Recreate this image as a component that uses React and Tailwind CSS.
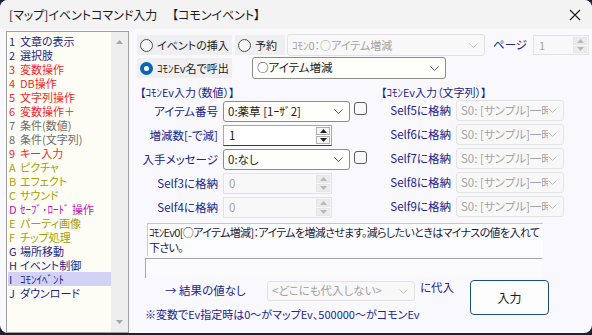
import React from "react";

const NAVY = "text-[#22228c]";

const items = [
  ["1", "文章の表示", "text-[#1e1e8a]"],
  ["2", "選択肢", "text-[#1e1e8a]"],
  ["3", "変数操作", "text-[#f02828]"],
  ["4", "DB操作", "text-[#f02828]"],
  ["5", "文字列操作", "text-[#f02828]"],
  ["6", "変数操作＋", "text-[#f02828]"],
  ["7", "条件(数値)", "text-[#6e6e6e]"],
  ["8", "条件(文字列)", "text-[#6e6e6e]"],
  ["9", "キー入力", "text-[#f02828]"],
  ["A", "ピクチャ", "text-[#a89f00]"],
  ["B", "エフェクト", "text-[#a89f00]"],
  ["C", "サウンド", "text-[#a89f00]"],
  ["D", "ｾｰﾌﾞ･ﾛｰﾄﾞ 操作", "text-[#c410b4]"],
  ["E", "パーティ画像", "text-[#a89f00]"],
  ["F", "チップ処理", "text-[#a89f00]"],
  ["G", "場所移動", "text-[#1e1e8a]"],
  ["H", "イベント制御", "text-[#1e1e8a]"],
  ["I", "ｺﾓﾝｲﾍﾞﾝﾄ", "text-[#1e1e8a]", true],
  ["J", "ダウンロード", "text-[#1e1e8a]"],
];

function Chevron({ color = "#5a5a5a" }) {
  return (
    <svg width="9" height="5" viewBox="0 0 9 5" fill="none" className="shrink-0">
      <path d="M0.5 0.5L4.5 4.5L8.5 0.5" stroke={color} strokeWidth="1" />
    </svg>
  );
}

function Tri({ up, color }) {
  return (
    <svg width="7" height="4" viewBox="0 0 7 4">
      <path d={up ? "M0 4L3.5 0L7 4Z" : "M0 0L3.5 4L7 0Z"} fill={color} />
    </svg>
  );
}

function Combo({ text, disabled, className }) {
  return (
    <div
      className={
        "flex items-center justify-between rounded-[3px] border pl-[4px] pr-[6px] overflow-hidden shrink-0 " +
        (disabled
          ? "border-[#e3e3e3] bg-[#f8f8f8] text-[#a3a3a3] "
          : "border-[#8c8c8c] bg-[#fefefb] text-[#1a1a1a] ") +
        className
      }
    >
      <span className="whitespace-nowrap overflow-hidden flex-1">{text}</span>
      <Chevron color={disabled ? "#c4c4c4" : "#5a5a5a"} />
    </div>
  );
}

function Spin({ value, disabled, className }) {
  const tri = disabled ? "#b8b8b8" : "#202020";
  const btn = disabled ? "border-[#e6e6e6] bg-[#ececec]" : "border-[#b0b0b0] bg-[#f6f6f6]";
  return (
    <div
      className={
        "flex items-stretch border shrink-0 " +
        (disabled
          ? "border-[#e3e3e3] bg-[#f8f8f8] text-[#a3a3a3] "
          : "border-[#a8a8a8] border-b-[#3c3c3c] bg-white text-[#1a1a1a] ") +
        className
      }
    >
      <span className="flex-1 pl-[5px] flex items-center">{value}</span>
      <div className="w-[16px] flex flex-col gap-[1px] p-[1px]">
        <div className={"flex-1 flex items-center justify-center border " + btn}>
          <Tri up color={tri} />
        </div>
        <div className={"flex-1 flex items-center justify-center border " + btn}>
          <Tri color={tri} />
        </div>
      </div>
    </div>
  );
}

function Radio({ label, checked, className }) {
  return (
    <div className={"flex items-center gap-[4px] bg-[#efeff1] pl-[3px] h-[20px] text-[#1c1c1c] shrink-0 " + className}>
      {checked ? (
        <span className="w-[13px] h-[13px] rounded-full bg-[#0a64b8] flex items-center justify-center shrink-0">
          <span className="w-[5px] h-[5px] rounded-full bg-white" />
        </span>
      ) : (
        <span className="w-[13px] h-[13px] rounded-full border border-[#4e4e4e] bg-[#f6f6f6] shrink-0" />
      )}
      <span className="text-[11px] whitespace-nowrap">{label}</span>
    </div>
  );
}

function Check() {
  return <span className="w-[13px] h-[13px] rounded-[3px] border border-[#5c5c5c] bg-[#f8f8f8] shrink-0" />;
}

export default function App() {
  return (
    <div className="w-[592px] h-[335px] bg-[#1b2333] overflow-hidden font-['Noto_Sans_CJK_JP',sans-serif] [font-feature-settings:'palt']">
      <div className="h-[333px] rounded-[8px] bg-[#f9f9fd] flex flex-col overflow-hidden">
        {/* title bar */}
        <div className="h-[29px] bg-[#f3f3f3] flex items-center justify-between pl-[9px] pr-[10px] shrink-0">
          <span className="text-[12px] text-[#1c1c1c] whitespace-pre">
            [マップ]イベントコマンド入力　 【コモンイベント】
          </span>
          <svg width="12" height="12" viewBox="0 0 12 12" className="mr-[1px]">
            <path d="M1 1L11 11M11 1L1 11" stroke="#1c1c1c" strokeWidth="1.1" />
          </svg>
        </div>

        <div className="flex flex-1 pl-[6px] pt-[2px]">
          {/* command list */}
          <div className="w-[123px] h-[302px] border border-[#a0a0a0] bg-[#fdfdf5] flex shrink-0">
            <div className="flex-1 pt-[2px] pl-[1px]">
              {items.map(([k, t, c, sel]) => (
                <div
                  key={k}
                  className={
                    "h-[14px] leading-[14px] text-[11px] pl-[1px] whitespace-nowrap flex " +
                    c +
                    (sel ? " bg-[#d2d2f6]" : "")
                  }
                >
                  <span className="w-[11px]">{k}</span>
                  <span>{t}</span>
                </div>
              ))}
            </div>
            <div className="w-[17px] bg-[#eeeeee] flex flex-col items-center justify-between py-[8px]">
              <Tri up color="#a6a6a6" />
              <Tri color="#a6a6a6" />
            </div>
          </div>

          {/* right pane */}
          <div className="flex-1 pl-[8px] pt-[3px] pr-[2px] flex flex-col text-[11px]">
            <div className="flex items-center h-[22px]">
              <Radio label="イベントの挿入" className="w-[95px]" />
              <Radio label="予約" className="w-[50px] ml-[3px]" />
              <Combo text="ｺﾓﾝ0：○アイテム増減" disabled className="w-[198px] h-[22px] ml-[2px]" />
              <span className={"ml-[8px] text-[11.5px] whitespace-nowrap " + NAVY}>ページ</span>
              <Spin value="1" disabled className="w-[56px] h-[20px] ml-[6px]" />
            </div>
            <div className="flex items-center h-[22px] mt-[1px]">
              <Radio label="ｺﾓﾝEv名で呼出" checked className="w-[95px]" />
              <Combo text="○アイテム増減" className="w-[194px] h-[22px] ml-[20px] text-[11.5px]" />
            </div>

            <div className="flex mt-[6px]">
              {/* numeric inputs */}
              <div className="w-[244px] flex flex-col shrink-0">
                <div className={"h-[14px] leading-[14px] pl-[3px] " + NAVY}>【ｺﾓﾝEv入力（数値）】</div>
                <div className="flex flex-col gap-[3px] mt-[2px]">
                  <div className="flex items-center h-[21px]">
                    <span className={"w-[81px] text-right text-[11.5px] whitespace-nowrap " + NAVY}>アイテム番号</span>
                    <Combo text="0:薬草 [1ｰｻﾞ2]" className="w-[127px] h-[21px] ml-[5px] text-[11.5px]" />
                    <span className="ml-[4px] -mt-[6px] flex">
                      <Check />
                    </span>
                  </div>
                  <div className="flex items-center h-[21px]">
                    <span className={"w-[81px] text-right text-[11.5px] whitespace-nowrap " + NAVY}>増減数[-で減]</span>
                    <Spin value="1" className="w-[109px] h-[21px] ml-[5px] text-[11.5px]" />
                  </div>
                  <div className="flex items-center h-[21px]">
                    <span className={"w-[81px] text-right text-[11.5px] whitespace-nowrap " + NAVY}>入手メッセージ</span>
                    <Combo text="0:なし" className="w-[127px] h-[21px] ml-[5px] text-[11.5px]" />
                    <span className="ml-[4px] -mt-[4px] flex">
                      <Check />
                    </span>
                  </div>
                  <div className="flex items-center h-[21px]">
                    <span className={"w-[81px] text-right text-[11.5px] whitespace-nowrap " + NAVY}>Self3に格納</span>
                    <Spin value="0" disabled className="w-[109px] h-[21px] ml-[5px] text-[11.5px]" />
                  </div>
                  <div className="flex items-center h-[21px]">
                    <span className={"w-[81px] text-right text-[11.5px] whitespace-nowrap " + NAVY}>Self4に格納</span>
                    <Spin value="0" disabled className="w-[109px] h-[21px] ml-[5px] text-[11.5px]" />
                  </div>
                </div>
              </div>

              {/* string inputs */}
              <div className="flex flex-col">
                <div className={"h-[14px] leading-[14px] whitespace-nowrap " + NAVY}>【ｺﾓﾝEv入力（文字列）】</div>
                <div className="flex flex-col gap-[3px] mt-[1px]">
                  {["Self5に格納", "Self6に格納", "Self7に格納", "Self8に格納", "Self9に格納"].map((l) => (
                    <div key={l} className="flex items-center h-[21px]">
                      <span className={"w-[70px] text-right text-[11.5px] whitespace-nowrap " + NAVY}>{l}</span>
                      <Combo text="S0: [サンプル]一時保存" disabled className="w-[108px] h-[21px] ml-[5px] text-[11.5px]" />
                    </div>
                  ))}
                </div>
              </div>
            </div>

            {/* description */}
            <div className="ml-[10px] mt-[5px] w-[396px] h-[33px] border-t border-l border-[#c8c8c8] bg-[#fdfdff] text-[11px] tracking-[-0.65px] leading-[15px] text-[#1a1a40] pl-[1px] pt-[1px] whitespace-nowrap overflow-hidden">
              ｺﾓﾝEv0[○アイテム増減]：アイテムを増減させます。減らしたいときはマイナスの値を入れて
              <br />
              下さい。
            </div>
            <div className="ml-[8px] mt-[2px] w-[397px] h-[20px] border-t border-l border-[#a4a4a4] bg-[#fbfbfe]" />

            {/* bottom */}
            <div className="flex mt-[2px]">
              <div className="flex flex-col w-[333px] shrink-0">
                <div className="flex items-center h-[22px]">
                  <span className={"ml-[28px] w-[102px] text-[11.5px] whitespace-nowrap " + NAVY}>→ 結果の値なし</span>
                  <Combo text="<どこにも代入しない>" disabled className="w-[148px] h-[20px] text-[11.5px]" />
                  <span className={"ml-[5px] -mt-[6px] text-[11.5px] whitespace-nowrap " + NAVY}>に代入</span>
                </div>
                <div className={"ml-[8px] mt-[5px] h-[14px] leading-[14px] text-[11px] whitespace-nowrap " + NAVY}>
                  ※変数でEv指定時は0～がマップEv、500000～がコモンEv
                </div>
              </div>
              <div className="w-[79px] h-[35px] rounded-[4px] border border-[#1d4f7c] bg-[#fdfdfd] flex items-center justify-center text-[12px] text-[#1a1a1a]">
                入力
              </div>
            </div>
          </div>
        </div>
      </div>
    </div>
  );
}
